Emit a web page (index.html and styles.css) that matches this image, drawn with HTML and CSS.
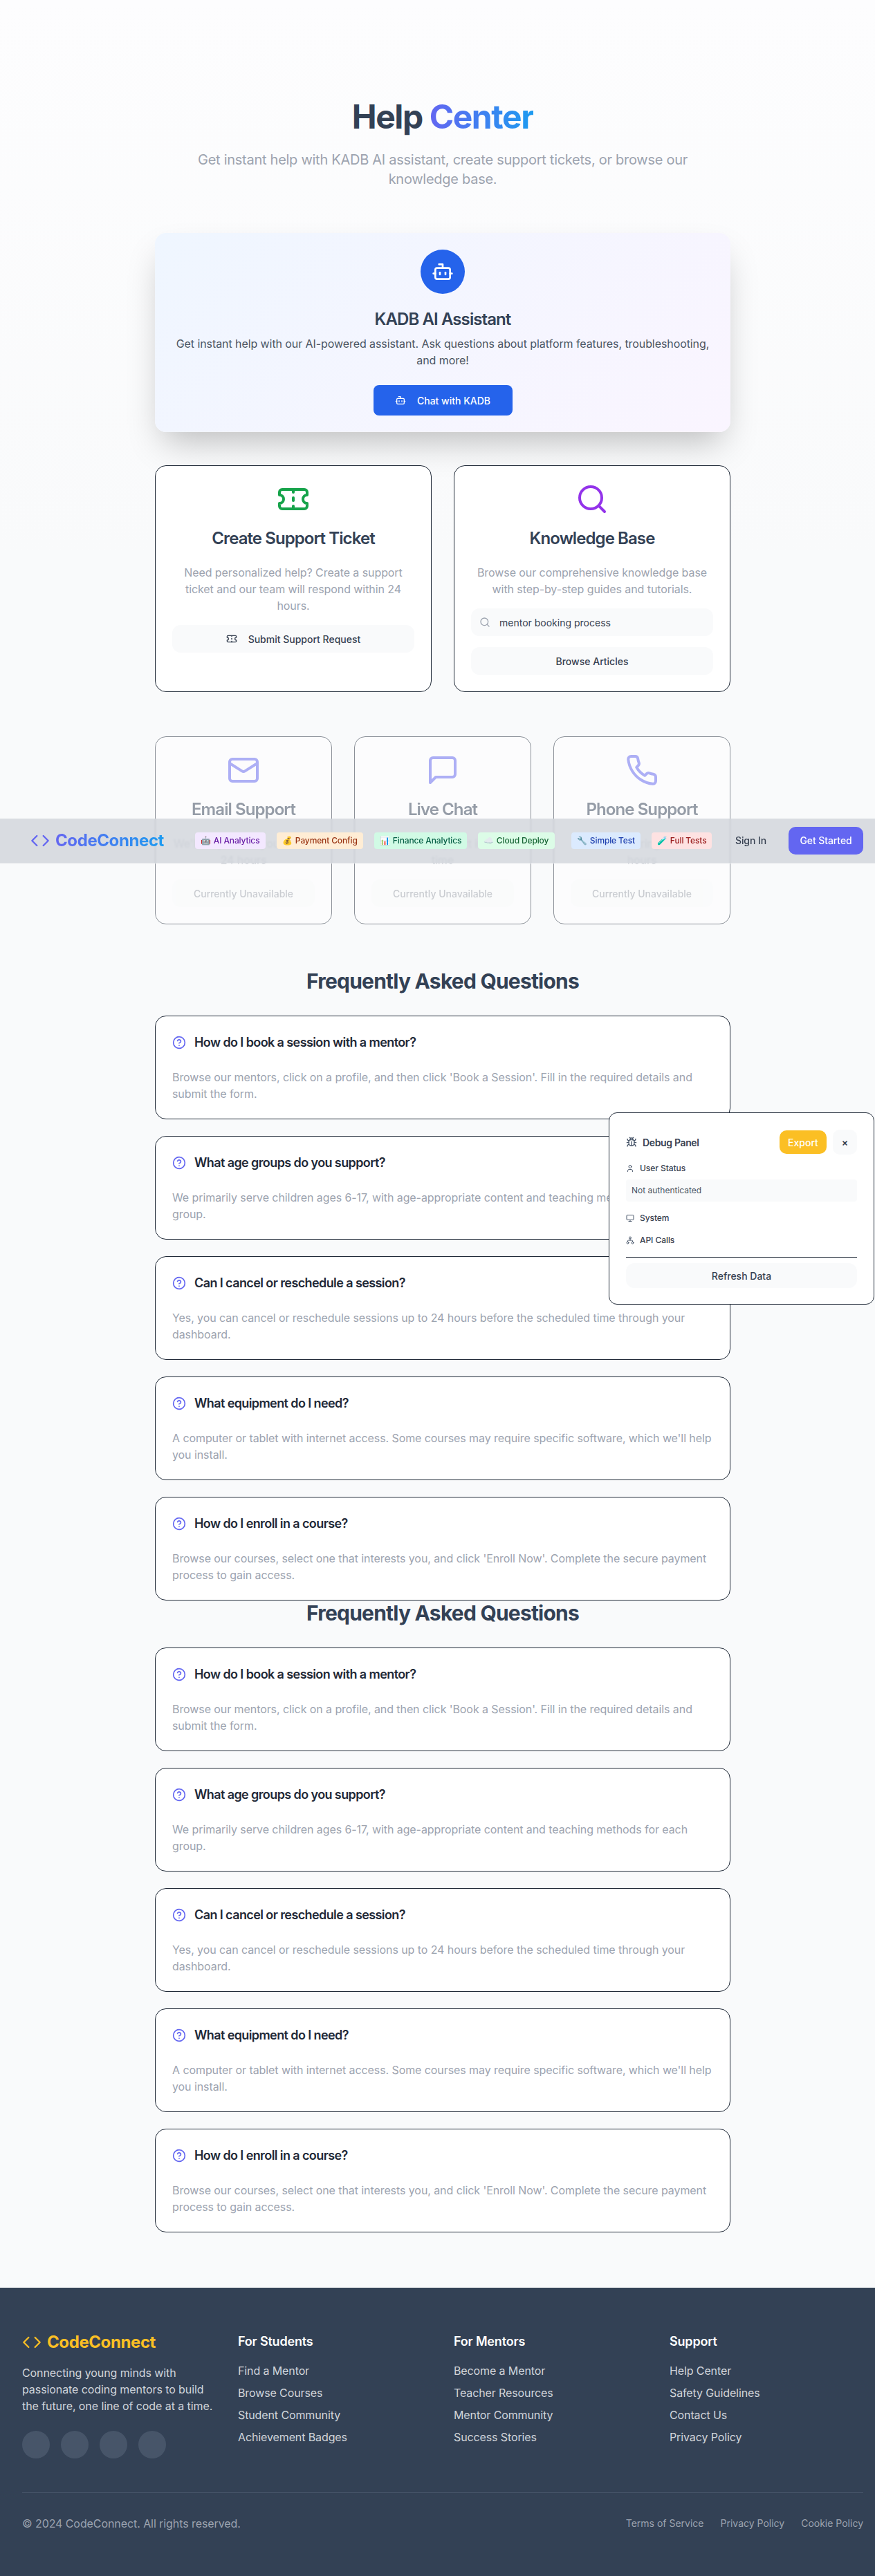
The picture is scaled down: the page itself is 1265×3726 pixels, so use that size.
FILE: index.html
```html
<!DOCTYPE html>
<html lang="en">
<head>
<meta charset="utf-8">
<title>Help Center</title>
<link rel="stylesheet" href="styles.css">
</head>
<body>
<svg class="sprite" xmlns="http://www.w3.org/2000/svg">
  <symbol id="i-code" viewBox="0 0 24 24"><polyline points="16 18 22 12 16 6"/><polyline points="8 6 2 12 8 18"/></symbol>
  <symbol id="i-bot" viewBox="0 0 24 24"><path d="M12 8V4H8"/><rect width="16" height="12" x="4" y="8" rx="2"/><path d="M2 14h2"/><path d="M20 14h2"/><path d="M15 13v2"/><path d="M9 13v2"/></symbol>
  <symbol id="i-ticket" viewBox="0 0 24 24"><path d="M2 9a3 3 0 0 1 0 6v2a2 2 0 0 0 2 2h16a2 2 0 0 0 2-2v-2a3 3 0 0 1 0-6V7a2 2 0 0 0-2-2H4a2 2 0 0 0-2 2Z"/><path d="M12 5v2"/><path d="M12 17v2"/><path d="M12 11v2"/></symbol>
  <symbol id="i-search" viewBox="0 0 24 24"><circle cx="11" cy="11" r="8"/><path d="m21 21-4.3-4.3"/></symbol>
  <symbol id="i-mail" viewBox="0 0 24 24"><rect width="20" height="16" x="2" y="4" rx="2"/><path d="m22 7-8.97 5.7a1.94 1.94 0 0 1-2.06 0L2 7"/></symbol>
  <symbol id="i-chat" viewBox="0 0 24 24"><path d="M21 15a2 2 0 0 1-2 2H7l-4 4V5a2 2 0 0 1 2-2h14a2 2 0 0 1 2 2z"/></symbol>
  <symbol id="i-phone" viewBox="0 0 24 24"><path d="M22 16.92v3a2 2 0 0 1-2.18 2 19.79 19.79 0 0 1-8.63-3.07 19.5 19.5 0 0 1-6-6 19.79 19.79 0 0 1-3.07-8.67A2 2 0 0 1 4.11 2h3a2 2 0 0 1 2 1.72 12.84 12.84 0 0 0 .7 2.81 2 2 0 0 1-.45 2.11L8.09 9.91a16 16 0 0 0 6 6l1.27-1.27a2 2 0 0 1 2.11-.45 12.84 12.84 0 0 0 2.81.7A2 2 0 0 1 22 16.92z"/></symbol>
  <symbol id="i-help" viewBox="0 0 24 24"><circle cx="12" cy="12" r="10"/><path d="M9.09 9a3 3 0 0 1 5.83 1c0 2-3 3-3 3"/><path d="M12 17h.01"/></symbol>
  <symbol id="i-bug" viewBox="0 0 24 24"><path d="m8 2 1.88 1.88"/><path d="M14.12 3.88 16 2"/><path d="M9 7.13v-1a3.003 3.003 0 1 1 6 0v1"/><path d="M12 20c-3.3 0-6-2.7-6-6v-3a4 4 0 0 1 4-4h4a4 4 0 0 1 4 4v3c0 3.3-2.7 6-6 6"/><path d="M12 20v-9"/><path d="M6.53 9C4.6 8.8 3 7.1 3 5"/><path d="M6 13H2"/><path d="M3 21c0-2.1 1.7-3.9 3.8-4"/><path d="M20.97 5c0 2.1-1.6 3.8-3.5 4"/><path d="M22 13h-4"/><path d="M17.2 17c2.1.1 3.8 1.9 3.8 4"/></symbol>
  <symbol id="i-user" viewBox="0 0 24 24"><path d="M19 21v-2a4 4 0 0 0-4-4H9a4 4 0 0 0-4 4v2"/><circle cx="12" cy="7" r="4"/></symbol>
  <symbol id="i-monitor" viewBox="0 0 24 24"><rect width="20" height="14" x="2" y="3" rx="2"/><path d="M8 21h8"/><path d="M12 17v4"/></symbol>
  <symbol id="i-net" viewBox="0 0 24 24"><circle cx="12" cy="5" r="3"/><circle cx="5" cy="19" r="3"/><circle cx="19" cy="19" r="3"/><path d="M5 16v-2a2 2 0 0 1 2-2h10a2 2 0 0 1 2 2v2"/><path d="M12 8v4"/></symbol>
</svg>

<div class="page">
  <main class="main">
    <header class="hero">
      <h1 class="hero-title">Help <span class="grad">Center</span></h1>
      <p class="hero-sub">Get instant help with KADB AI assistant, create support tickets, or browse our knowledge base.</p>
    </header>

    <section class="ai-card">
      <div class="ai-circle"><svg class="ic ic-32"><use href="#i-bot"/></svg></div>
      <h2 class="card-title ai-title">KADB AI Assistant</h2>
      <p class="ai-desc">Get instant help with our AI-powered assistant. Ask questions about platform features, troubleshooting, and more!</p>
      <button class="btn-blue"><svg class="ic ic-16"><use href="#i-bot"/></svg><span>Chat with KADB</span></button>
    </section>

    <section class="two-col">
      <article class="card">
        <svg class="ic ic-48 green"><use href="#i-ticket"/></svg>
        <h3 class="card-title">Create Support Ticket</h3>
        <p class="card-desc">Need personalized help? Create a support ticket and our team will respond within 24 hours.</p>
        <button class="btn-soft"><svg class="ic ic-16"><use href="#i-ticket"/></svg><span>Submit Support Request</span></button>
      </article>
      <article class="card">
        <svg class="ic ic-48 purple"><use href="#i-search"/></svg>
        <h3 class="card-title">Knowledge Base</h3>
        <p class="card-desc">Browse our comprehensive knowledge base with step-by-step guides and tutorials.</p>
        <label class="search"><svg class="ic ic-16 muted"><use href="#i-search"/></svg><input class="search-input" type="text" value="mentor booking process"></label>
        <button class="btn-soft">Browse Articles</button>
      </article>
    </section>

    <section class="three-col">
      <article class="card dim">
        <svg class="ic ic-48 indigo"><use href="#i-mail"/></svg>
        <h3 class="card-title">Email Support</h3>
        <p class="card-desc">We'll respond to you within 24 hours</p>
        <button class="btn-soft btn-off">Currently Unavailable</button>
      </article>
      <article class="card dim">
        <svg class="ic ic-48 indigo"><use href="#i-chat"/></svg>
        <h3 class="card-title">Live Chat</h3>
        <p class="card-desc">Chat with support in real time</p>
        <button class="btn-soft btn-off">Currently Unavailable</button>
      </article>
      <article class="card dim">
        <svg class="ic ic-48 indigo"><use href="#i-phone"/></svg>
        <h3 class="card-title">Phone Support</h3>
        <p class="card-desc">Talk to us during business hours</p>
        <button class="btn-soft btn-off">Currently Unavailable</button>
      </article>
    </section>

    <section class="faq">
      <h2 class="faq-title">Frequently Asked Questions</h2>
      <div class="faq-list">
        <article class="faq-card"><div class="faq-q"><svg class="ic ic-20 indigo"><use href="#i-help"/></svg><h3 class="faq-h">How do I book a session with a mentor?</h3></div><p class="faq-a">Browse our mentors, click on a profile, and then click 'Book a Session'. Fill in the required details and submit the form.</p></article>
        <article class="faq-card"><div class="faq-q"><svg class="ic ic-20 indigo"><use href="#i-help"/></svg><h3 class="faq-h">What age groups do you support?</h3></div><p class="faq-a">We primarily serve children ages 6-17, with age-appropriate content and teaching methods for each group.</p></article>
        <article class="faq-card"><div class="faq-q"><svg class="ic ic-20 indigo"><use href="#i-help"/></svg><h3 class="faq-h">Can I cancel or reschedule a session?</h3></div><p class="faq-a">Yes, you can cancel or reschedule sessions up to 24 hours before the scheduled time through your dashboard.</p></article>
        <article class="faq-card"><div class="faq-q"><svg class="ic ic-20 indigo"><use href="#i-help"/></svg><h3 class="faq-h">What equipment do I need?</h3></div><p class="faq-a">A computer or tablet with internet access. Some courses may require specific software, which we'll help you install.</p></article>
        <article class="faq-card"><div class="faq-q"><svg class="ic ic-20 indigo"><use href="#i-help"/></svg><h3 class="faq-h">How do I enroll in a course?</h3></div><p class="faq-a">Browse our courses, select one that interests you, and click 'Enroll Now'. Complete the secure payment process to gain access.</p></article>
      </div>
    </section>

    <section class="faq">
      <h2 class="faq-title">Frequently Asked Questions</h2>
      <div class="faq-list">
        <article class="faq-card"><div class="faq-q"><svg class="ic ic-20 indigo"><use href="#i-help"/></svg><h3 class="faq-h">How do I book a session with a mentor?</h3></div><p class="faq-a">Browse our mentors, click on a profile, and then click 'Book a Session'. Fill in the required details and submit the form.</p></article>
        <article class="faq-card"><div class="faq-q"><svg class="ic ic-20 indigo"><use href="#i-help"/></svg><h3 class="faq-h">What age groups do you support?</h3></div><p class="faq-a">We primarily serve children ages 6-17, with age-appropriate content and teaching methods for each group.</p></article>
        <article class="faq-card"><div class="faq-q"><svg class="ic ic-20 indigo"><use href="#i-help"/></svg><h3 class="faq-h">Can I cancel or reschedule a session?</h3></div><p class="faq-a">Yes, you can cancel or reschedule sessions up to 24 hours before the scheduled time through your dashboard.</p></article>
        <article class="faq-card"><div class="faq-q"><svg class="ic ic-20 indigo"><use href="#i-help"/></svg><h3 class="faq-h">What equipment do I need?</h3></div><p class="faq-a">A computer or tablet with internet access. Some courses may require specific software, which we'll help you install.</p></article>
        <article class="faq-card"><div class="faq-q"><svg class="ic ic-20 indigo"><use href="#i-help"/></svg><h3 class="faq-h">How do I enroll in a course?</h3></div><p class="faq-a">Browse our courses, select one that interests you, and click 'Enroll Now'. Complete the secure payment process to gain access.</p></article>
      </div>
    </section>
  </main>

  <footer class="footer">
    <div class="foot-grid">
      <div class="foot-brand">
        <div class="foot-logo"><svg class="ic ic-28"><use href="#i-code"/></svg><span>CodeConnect</span></div>
        <p class="foot-about">Connecting young minds with passionate coding mentors to build the future, one line of code at a time.</p>
        <div class="socials"><span class="social"></span><span class="social"></span><span class="social"></span><span class="social"></span></div>
      </div>
      <div class="foot-col"><h4 class="foot-h">For Students</h4><a class="foot-link">Find a Mentor</a><a class="foot-link">Browse Courses</a><a class="foot-link">Student Community</a><a class="foot-link">Achievement Badges</a></div>
      <div class="foot-col"><h4 class="foot-h">For Mentors</h4><a class="foot-link">Become a Mentor</a><a class="foot-link">Teacher Resources</a><a class="foot-link">Mentor Community</a><a class="foot-link">Success Stories</a></div>
      <div class="foot-col"><h4 class="foot-h">Support</h4><a class="foot-link">Help Center</a><a class="foot-link">Safety Guidelines</a><a class="foot-link">Contact Us</a><a class="foot-link">Privacy Policy</a></div>
    </div>
    <div class="foot-bottom">
      <p class="copy">© 2024 CodeConnect. All rights reserved.</p>
      <div class="legal"><a class="legal-link">Terms of Service</a><a class="legal-link">Privacy Policy</a><a class="legal-link">Cookie Policy</a></div>
    </div>
  </footer>

  <nav class="nav">
    <div class="logo"><svg class="ic ic-28"><use href="#i-code"/></svg><span class="grad">CodeConnect</span></div>
    <div class="badges">
      <div class="badge-group">
        <span class="badge b-purple"><span class="emo">🤖</span> AI Analytics</span>
        <span class="badge b-orange"><span class="emo">💰</span> Payment Config</span>
        <span class="badge b-emerald"><span class="emo">📊</span> Finance Analytics</span>
        <span class="badge b-green"><span class="emo">☁️</span> Cloud Deploy</span>
      </div>
      <div class="badge-group">
        <span class="badge b-blue"><span class="emo">🔧</span> Simple Test</span>
        <span class="badge b-red"><span class="emo">🧪</span> Full Tests</span>
      </div>
    </div>
    <div class="nav-right"><a class="sign-in">Sign In</a><button class="get-started">Get Started</button></div>
  </nav>

  <aside class="debug">
    <div class="debug-head">
      <div class="debug-name"><svg class="ic ic-16"><use href="#i-bug"/></svg><span>Debug Panel</span></div>
      <div class="debug-actions"><button class="export">Export</button><button class="close">×</button></div>
    </div>
    <div class="debug-row"><svg class="ic ic-12"><use href="#i-user"/></svg><span>User Status</span></div>
    <div class="debug-box">Not authenticated</div>
    <div class="debug-row debug-sys"><svg class="ic ic-12"><use href="#i-monitor"/></svg><span>System</span></div>
    <div class="debug-row debug-api"><svg class="ic ic-12"><use href="#i-net"/></svg><span>API Calls</span></div>
    <div class="debug-foot"><button class="refresh">Refresh Data</button></div>
  </aside>
</div>
</body>
</html>
```

FILE: styles.css
```css
* { box-sizing: border-box; }
html, body { margin: 0; padding: 0; overflow-x: hidden; background: #f9fafb; }
body { font-family: Inter, "Noto Color Emoji", sans-serif; color: #374151; }
h1, h2, h3, h4, p { margin: 0; }
button { font-family: inherit; border: 0; cursor: pointer; }
.sprite { width: 0; height: 0; position: absolute; }

.page { position: relative; width: 1280px; height: 3726px; background: linear-gradient(180deg, #fdfdfe 0, #f9fafb 800px); }

.ic { fill: none; stroke: currentColor; stroke-width: 2; stroke-linecap: round; stroke-linejoin: round; flex: none; display: block; }
.ic-12 { width: 12px; height: 12px; }
.ic-16 { width: 16px; height: 16px; }
.ic-20 { width: 20px; height: 20px; }
.ic-28 { width: 28px; height: 28px; }
.ic-32 { width: 32px; height: 32px; }
.ic-48 { width: 48px; height: 48px; }
.green { color: #16a34a; }
.purple { color: #9333ea; }
.indigo { color: #6366f1; }
.muted { color: #9ca3af; }

.grad { background: linear-gradient(90deg, #6366f1, #1d9bf0); -webkit-background-clip: text; background-clip: text; color: transparent; }

.main { width: 832px; margin: 0 auto; padding: 145px 0 80px; }
.hero { text-align: center; margin-bottom: 64px; }
.hero-title { font-size: 48px; line-height: 48px; font-weight: 700; letter-spacing: -0.03em; color: #334155; margin-bottom: 24px; }
.hero-title .grad { display: inline-block; }
.hero-sub { font-size: 20px; line-height: 28px; letter-spacing: -0.0135em; color: #9ca3af; max-width: 768px; margin: 0 auto; }

.ai-card { height: 288px; padding: 24px; border-radius: 16px; background: linear-gradient(135deg, #eff6ff, #faf5ff); box-shadow: 0 25px 50px -12px rgba(0, 0, 0, .25); text-align: center; margin-bottom: 48px; display: flex; flex-direction: column; align-items: center; }
.ai-circle { width: 64px; height: 64px; border-radius: 50%; background: #2563eb; color: #fff; display: flex; align-items: center; justify-content: center; margin-bottom: 21px; }
.card-title { font-size: 24px; line-height: 32px; font-weight: 600; letter-spacing: -0.038em; color: #334155; }
.ai-title { margin-bottom: 7px; }
.ai-desc { font-size: 16px; line-height: 24px; letter-spacing: -0.005em; color: #4b5563; margin-bottom: 24px; }
.btn-blue { width: 201px; height: 44px; background: #2563eb; color: #fff; border-radius: 8px; font-size: 14px; font-weight: 500; display: flex; align-items: center; justify-content: center; gap: 16px; }

.two-col { display: grid; grid-template-columns: 400px 400px; gap: 32px; margin-bottom: 64px; }
.three-col { display: grid; grid-template-columns: repeat(3, 256px); gap: 32px; margin-bottom: 64px; }

.card { background: #fff; border: 1px solid #1f2937; border-radius: 16px; padding: 24px; display: flex; flex-direction: column; align-items: center; text-align: center; }
.card .ic-48 { margin-bottom: 17px; }
.card .card-title { margin-bottom: 21px; }
.card-desc { font-size: 16px; line-height: 24px; letter-spacing: -0.005em; color: #9ca3af; margin-bottom: 16px; }
.btn-soft { width: 100%; height: 40px; background: #f9fafb; border-radius: 12px; color: #374151; font-size: 14px; font-weight: 500; display: flex; align-items: center; justify-content: center; gap: 16px; }
.search { width: 100%; height: 40px; background: #f9fafb; border-radius: 12px; display: flex; align-items: center; gap: 13px; padding-left: 12px; margin-bottom: 16px; }
.search-input { flex: 1; min-width: 0; border: 0; background: transparent; font-family: inherit; font-size: 14px; color: #374151; padding: 0; outline: none; }
.dim { opacity: .5; }
.btn-off { opacity: .5; }

.faq-title { font-size: 30px; line-height: 36px; font-weight: 700; letter-spacing: -0.026em; color: #334155; text-align: center; margin-bottom: 32px; }
.faq-list { display: flex; flex-direction: column; gap: 24px; }
.faq-card { background: #fff; border: 1px solid #1f2937; border-radius: 16px; padding: 24px; }
.faq-q { display: flex; align-items: center; gap: 12px; margin-bottom: 24px; }
.faq-h { font-size: 18px; line-height: 28px; font-weight: 600; letter-spacing: -0.033em; color: #1f2937; }
.faq-a { font-size: 16px; line-height: 24px; letter-spacing: -0.005em; color: #9ca3af; }

.footer { background: #334155; padding: 64px 32px; height: 417px; }
.foot-grid { display: grid; grid-template-columns: repeat(4, 280px); gap: 32px; margin-bottom: 48px; height: 184px; }
.foot-logo { display: flex; align-items: center; gap: 8px; color: #fbbf24; font-size: 24px; line-height: 32px; font-weight: 700; letter-spacing: -0.017em; margin-bottom: 16px; margin-top: -1px; }
.foot-about { font-size: 16px; line-height: 24px; letter-spacing: -0.005em; color: #d1d5db; margin-bottom: 24px; }
.socials { display: flex; gap: 16px; }
.social { width: 40px; height: 40px; border-radius: 50%; background: #475569; }
.foot-col { display: flex; flex-direction: column; }
.foot-h { font-size: 18px; line-height: 28px; font-weight: 600; letter-spacing: -0.01em; color: #fff; margin-bottom: 16px; }
.foot-link { font-size: 16px; line-height: 24px; letter-spacing: -0.007em; color: #d1d5db; margin-bottom: 8px; }
.foot-bottom { border-top: 1px solid #475569; padding-top: 32px; display: flex; justify-content: space-between; align-items: center; }
.copy { font-size: 16px; line-height: 24px; letter-spacing: -0.005em; color: #9ca3af; }
.legal { display: flex; gap: 24px; }
.legal-link { font-size: 14px; line-height: 20px; color: #9ca3af; }

.nav { position: absolute; left: 0; top: 1184px; width: 1280px; height: 65px; background: rgba(209, 213, 219, .8); -webkit-backdrop-filter: blur(1px); backdrop-filter: blur(1px); border-bottom: 1px solid #e5e7eb; padding: 0 32px 1px 44px; display: flex; align-items: center; }
.logo { display: flex; align-items: center; gap: 8px; font-size: 24px; line-height: 32px; font-weight: 700; letter-spacing: -0.017em; color: #6366f1; margin-right: 45px; }
.badges { display: flex; gap: 24px; }
.badge-group { display: flex; gap: 16px; }
.badge { height: 24px; padding: 0 0 0 8px; border-radius: 4px; font-size: 12px; line-height: 24px; font-weight: 500; letter-spacing: -0.011em; white-space: nowrap; }
.emo { margin-right: 1px; }
.b-purple { width: 102px; background: #f3e8ff; color: #6b21a8; }
.b-orange { width: 125px; background: #ffedd5; color: #9a3412; }
.b-emerald { width: 134px; background: #d1fae5; color: #065f46; }
.b-green { width: 111px; background: #dcfce7; color: #166534; }
.b-blue { width: 100px; background: #dbeafe; color: #1e40af; }
.b-red { width: 87px; background: #fee2e2; color: #991b1b; }
.nav-right { margin-left: auto; display: flex; align-items: center; gap: 32px; }
.sign-in { font-size: 14px; font-weight: 500; letter-spacing: -0.006em; color: #374151; }
.get-started { width: 108px; height: 40px; background: #6366f1; color: #fff; border-radius: 10px; font-size: 14px; font-weight: 500; letter-spacing: -0.006em; }

.debug { position: absolute; top: 1609px; right: 16px; width: 384px; height: 278px; background: #fff; border: 1px solid #1f2937; border-radius: 12px; padding: 24px; }
.debug-head { display: flex; align-items: center; justify-content: space-between; height: 36px; margin-bottom: 12px; }
.debug-name { display: flex; align-items: center; gap: 8px; font-size: 14px; font-weight: 600; letter-spacing: -0.025em; color: #374151; }
.debug-name .ic { color: #475569; }
.debug-actions { display: flex; align-items: center; gap: 9px; }
.export { width: 68px; height: 34px; background: #fbbf24; color: #fff; border-radius: 10px; font-size: 14px; font-weight: 500; }
.close { width: 35px; height: 36px; background: #f9fafb; color: #374151; border-radius: 10px; font-size: 14px; font-weight: 600; }
.debug-row { display: flex; align-items: center; gap: 8px; font-size: 12px; line-height: 16px; font-weight: 500; letter-spacing: -0.005em; color: #374151; }
.debug-row .ic { color: #475569; }
.debug-box { margin: 8px 0 16px; height: 32px; background: #f9fafb; border-radius: 4px; padding: 0 8px; font-size: 12px; line-height: 32px; color: #4b5563; }
.debug-sys { margin-bottom: 16px; }
.debug-foot { margin-top: 16px; border-top: 1px solid #1f2937; padding-top: 8px; }
.refresh { width: 100%; height: 36px; background: #f9fafb; color: #374151; border-radius: 12px; font-size: 14px; font-weight: 500; }
```
